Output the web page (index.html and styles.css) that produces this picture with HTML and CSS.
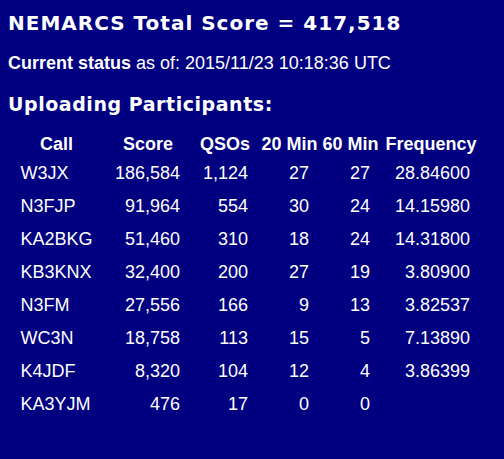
FILE: index.html
```html
<!DOCTYPE html>
<html>
<head>
<meta charset="utf-8">
<link rel="stylesheet" href="styles.css">
</head>
<body>
<h1 class="title">NEMARCS Total Score = 417,518</h1>
<p class="status"><b>Current status</b> as of: 2015/11/23 10:18:36 UTC</p>
<h2 class="subtitle">Uploading Participants:</h2>
<table class="scores">
<thead>
<tr><th class="c1">Call</th><th class="c2">Score</th><th class="c3">QSOs</th><th class="c4">20 Min</th><th class="c5">60 Min</th><th class="c6">Frequency</th></tr>
</thead>
<tbody>
<tr><td class="call">W3JX</td><td>186,584</td><td>1,124</td><td>27</td><td>27</td><td>28.84600</td></tr>
<tr><td class="call">N3FJP</td><td>91,964</td><td>554</td><td>30</td><td>24</td><td>14.15980</td></tr>
<tr><td class="call">KA2BKG</td><td>51,460</td><td>310</td><td>18</td><td>24</td><td>14.31800</td></tr>
<tr><td class="call">KB3KNX</td><td>32,400</td><td>200</td><td>27</td><td>19</td><td>3.80900</td></tr>
<tr><td class="call">N3FM</td><td>27,556</td><td>166</td><td>9</td><td>13</td><td>3.82537</td></tr>
<tr><td class="call">WC3N</td><td>18,758</td><td>113</td><td>15</td><td>5</td><td>7.13890</td></tr>
<tr><td class="call">K4JDF</td><td>8,320</td><td>104</td><td>12</td><td>4</td><td>3.86399</td></tr>
<tr><td class="call">KA3YJM</td><td>476</td><td>17</td><td>0</td><td>0</td><td></td></tr>
</tbody>
</table>
</body>
</html>
```
FILE: styles.css
```css
html, body {
  margin: 0;
  padding: 0;
  background: #000080;
  color: #ffffff;
}
body {
  padding: 0 8px;
  font-family: "Liberation Sans", Arial, sans-serif;
}
.title {
  margin: 11px 0 0 0;
  font-family: "DejaVu Sans", Verdana, sans-serif;
  font-weight: bold;
  font-size: 20px;
  line-height: 24px;
  letter-spacing: 1px;
  white-space: nowrap;
}
.status {
  margin: 17px 0 0 0;
  font-size: 18px;
  line-height: 22px;
  white-space: nowrap;
}
.subtitle {
  margin: 19px 0 0 0;
  font-family: "DejaVu Sans", Verdana, sans-serif;
  font-weight: bold;
  font-size: 19px;
  line-height: 22px;
  letter-spacing: 0.55px;
  white-space: nowrap;
}
.scores {
  margin-top: 16px;
  border-collapse: collapse;
  border-spacing: 0;
  table-layout: fixed;
  width: 473px;
  font-size: 18px;
}
.scores th {
  padding: 0;
  font-weight: bold;
  text-align: center;
  line-height: 26px;
  white-space: nowrap;
}
.scores td {
  padding: 0 11px 0 0;
  text-align: right;
  line-height: 33px;
  white-space: nowrap;
}
.scores td.call {
  text-align: left;
  padding: 0 0 0 12.5px;
}
.c1 { width: 97px; }
.c2 { width: 86px; }
.c3 { width: 68px; }
.c4 { width: 61px; }
.c5 { width: 61px; }
.c6 { width: 100px; }
```
